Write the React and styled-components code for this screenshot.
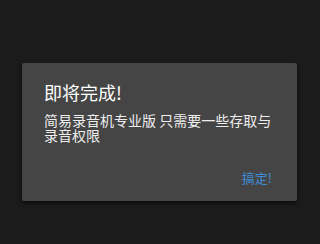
import React from "react";
import styled, { createGlobalStyle } from "styled-components";

const Global = createGlobalStyle`
  html, body { margin: 0; padding: 0; background: #1b1b1b; }
  body { width: 320px; height: 244px; overflow: hidden; font-family: "Roboto", "Noto Sans CJK SC", sans-serif; }
`;

const Screen = styled.div`
  width: 320px;
  height: 244px;
  padding: 63px 0 0 22px;
  box-sizing: border-box;
`;

const Dialog = styled.div`
  width: 275px;
  height: 138px;
  box-sizing: border-box;
  background: #454545;
  border-radius: 2px;
  box-shadow: 0 2px 4px rgba(0, 0, 0, 0.6);
  padding: 17px 22px 0 22px;
  display: flex;
  flex-direction: column;
`;

const Title = styled.div`
  color: #ffffff;
  font-size: 18px;
  line-height: 24px;
  font-family: "Noto Sans CJK SC", sans-serif;
`;

const Body = styled.div`
  margin-top: 9px;
  color: #eeeeee;
  font-size: 14px;
  line-height: 15px;
  font-family: "Noto Sans CJK SC", sans-serif;
`;

const Actions = styled.div`
  margin-top: auto;
  display: flex;
  justify-content: flex-end;
  padding-bottom: 14px;
  margin-right: 3px;
`;

const Button = styled.button`
  background: none;
  border: none;
  padding: 0;
  color: #3d8fd8;
  font-size: 13px;
  line-height: 18px;
  font-family: "Noto Sans CJK SC", sans-serif;
`;

export default function App() {
  return (
    <>
      <Global />
      <Screen>
        <Dialog>
          <Title>即将完成!</Title>
          <Body>简易录音机专业版 只需要一些存取与录音权限</Body>
          <Actions>
            <Button>搞定!</Button>
          </Actions>
        </Dialog>
      </Screen>
    </>
  );
}
